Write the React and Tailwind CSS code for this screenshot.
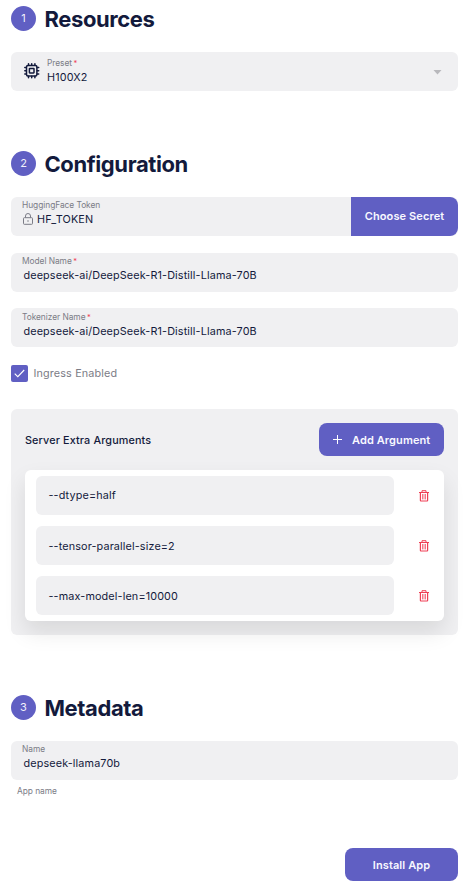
import React from 'react';

function StepHeading({ number, title }) {
  return (
    <div className="flex h-[28px] items-start">
      <span className="mt-px mr-[8.5px] flex size-[25px] shrink-0 items-center justify-center rounded-full bg-[#605fc3] text-[11px] leading-none text-[#f1f1fb]">
        {number}
      </span>
      <h2 className="text-[22px] leading-[28px] font-bold tracking-[-0.4px] text-[#131a3c]">{title}</h2>
    </div>
  );
}

function FieldLabel({ children, required }) {
  return (
    <div className="text-[8.4px] leading-[12px] tracking-[-0.05px] text-[#7b7c86]">
      {children}
      {required && <span className="ml-[1.5px] text-[7.5px] leading-none text-[#ef4056]">*</span>}
    </div>
  );
}

function TextField({ label, required, value, inset = 'pt-[2px]' }) {
  return (
    <div className={`h-[39px] rounded-[6px] bg-[#f0f0f2] pl-[11px] ${inset}`}>
      <FieldLabel required={required}>{label}</FieldLabel>
      <div className="pt-px pl-[1.5px] text-[10.8px] leading-[16px] tracking-[0.14px]">{value}</div>
    </div>
  );
}

function ChipIcon() {
  return (
    <svg className="mb-[2px]" width="16" height="16" viewBox="0 0 16 16" fill="none" stroke="#131a3c" strokeWidth="1.5" strokeLinecap="round">
      <rect x="2.5" y="2.5" width="10.4" height="10.4" rx="1.5" />
      <rect x="5.4" y="5.4" width="4.6" height="4.6" rx="0.4" />
      <path d="M4.5 .8v1.4M7.7 .8v1.4M10.9 .8v1.4M4.5 13.3v1.4M7.7 13.3v1.4M10.9 13.3v1.4M.8 4.5h1.4M.8 7.7h1.4M.8 10.9h1.4M13.3 4.5h1.4M13.3 7.7h1.4M13.3 10.9h1.4" />
    </svg>
  );
}

function LockIcon() {
  return (
    <svg className="mb-[2px]" width="12" height="12" viewBox="0 0 12 12" fill="none" stroke="#7b7c86">
      <rect x="1.5" y="4.7" width="9" height="6.6" rx=".8" />
      <path d="M3.5 4.6V3a2.5 2.5 0 0 1 5 0v1.6" />
      <path d="M6 7.2v1.6" strokeWidth="1.1" />
    </svg>
  );
}

function TrashIcon() {
  return (
    <svg width="10" height="12" viewBox="0 0 10 12" fill="none" stroke="#ef4056">
      <path d="M0 2.5h10M3 2.3V.7h4v1.6" />
      <path d="M1.4 2.5v8q0 .5.5.5h6.2q.5 0 .5-.5v-8" strokeWidth="1.2" />
      <path d="M3.5 4v5.4M5 4v5.4M6.5 4v5.4" strokeWidth=".7" />
    </svg>
  );
}

const serverArguments = [
  { value: '--dtype=half', inset: 'pt-[2px]' },
  { value: '--tensor-parallel-size=2', inset: 'pt-[3px]' },
  { value: '--max-model-len=10000', inset: 'pt-[3px]' },
];

export default function App() {
  return (
    <main className="h-[889px] w-[468px] overflow-hidden bg-white pt-[5px] pr-[10px] pl-[11px] font-['Inter',sans-serif] text-[#131a3c]">
      <section>
        <StepHeading number={1} title="Resources" />
        <div className="mt-[19px] flex h-[39px] items-center rounded-[6px] bg-[#f0f0f2] pr-[16px] pl-[13px]">
          <ChipIcon />
          <div className="ml-[7px] h-[39px] flex-1 pt-[5px]">
            <FieldLabel required>Preset</FieldLabel>
            <div className="pt-px text-[10.8px] leading-[16px] tracking-[0.14px]">H100X2</div>
          </div>
          <svg className="mt-px" width="9" height="5" viewBox="0 0 9 5" fill="#b8b8bc"><path d="M.5 0h8l-4 4.5z" /></svg>
        </div>
      </section>

      <section className="mt-[59px]">
        <StepHeading number={2} title="Configuration" />
        <div className="mt-[19px] flex h-[39px] overflow-hidden rounded-[6px] bg-[#f0f0f2]">
          <div className="flex-1 pt-[2px] pl-[11px]">
            <FieldLabel>HuggingFace Token</FieldLabel>
            <div className="flex items-center pt-px text-[10.8px] leading-[16px] tracking-[0.14px]">
              <LockIcon />
              <span className="ml-[3px]">HF_TOKEN</span>
            </div>
          </div>
          <button className="w-[107px] rounded-r-[8px] bg-[#605fc3] text-[11px] font-semibold tracking-[0.1px] text-[#f8f8ff]">Choose Secret</button>
        </div>
        <div className="mt-[17px] flex flex-col gap-[16px]">
          <TextField label="Model Name" required value="deepseek-ai/DeepSeek-R1-Distill-Llama-70B" />
          <TextField label="Tokenizer Name" required value="deepseek-ai/DeepSeek-R1-Distill-Llama-70B" inset="pt-[3px]" />
        </div>
        <label className="mt-[18px] flex h-[17px] items-center">
          <span className="flex size-[17px] items-center justify-center rounded-[2px] bg-[#605fc3]">
            <svg width="11" height="9" viewBox="0 0 11 9" fill="none" stroke="#fff" strokeWidth="1.1"><path d="M.7 4.6 3.8 7.7 10.2 1" /></svg>
          </span>
          <span className="ml-[5.5px] pt-[2px] text-[10.8px] tracking-[0.14px] text-[#7b7c86]">Ingress Enabled</span>
        </label>

        <div className="mt-[27px] h-[226px] rounded-[6px] bg-[#f0f0f2] p-[14px]">
          <div className="flex h-[33px] items-center justify-between">
            <h3 className="pt-[4px] text-[10.8px] font-medium tracking-[0.14px]">Server Extra Arguments</h3>
            <button className="flex h-[33px] w-[125px] items-center rounded-[8px] bg-[#605fc3] pl-[14px] text-[11px] font-semibold tracking-[0.1px] text-[#f8f8ff]">
              <svg className="mr-[10px]" width="9" height="9" viewBox="0 0 9 9" stroke="#fff"><path d="M4.5 0v9M0 4.5h9" /></svg>
              <span className="pt-px">Add Argument</span>
            </button>
          </div>
          <div className="mt-[14px] flex h-[151px] flex-col gap-[11px] rounded-[6px] bg-white pt-[6px] pl-[11px] shadow-[0_11px_22px_rgba(0,0,0,0.1)]">
            {serverArguments.map(({ value, inset }) => (
              <div key={value} className="flex h-[39px] items-center">
                <div className={`flex h-[39px] w-[358px] items-center rounded-[6px] bg-[#f0f0f2] pl-[12.5px] text-[10.8px] tracking-[0.14px] ${inset}`}>{value}</div>
                <button className="ml-[25px]" aria-label="Remove argument"><TrashIcon /></button>
              </div>
            ))}
          </div>
        </div>
      </section>

      <section className="mt-[59px]">
        <StepHeading number={3} title="Metadata" />
        <div className="mt-[19px]">
          <TextField label="Name" value="depseek-llama70b" />
        </div>
        <div className="mt-[5px] pl-[6px]"><FieldLabel>App name</FieldLabel></div>
      </section>

      <div className="mt-[51px] flex justify-end">
        <button className="h-[33px] w-[113px] rounded-[8px] bg-[#605fc3] pt-px text-[11px] font-semibold tracking-[0.1px] text-[#f8f8ff]">Install App</button>
      </div>
    </main>
  );
}
